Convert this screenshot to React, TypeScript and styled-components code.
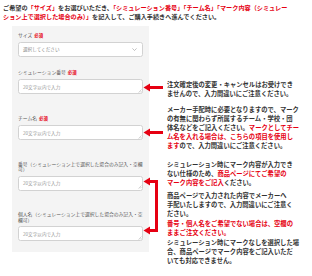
import React from "react";
import styled, { createGlobalStyle } from "styled-components";

const GlobalStyle = createGlobalStyle`
  html, body { margin: 0; padding: 0; background: #ffffff; }
  body { font-family: "Noto Sans CJK JP", "Noto Sans", sans-serif; }
`;

const RED = "#e60012";

const Page = styled.div`
  position: relative;
  width: 312px;
  height: 276px;
  overflow: hidden;
  background: #fff;
`;

const Intro = styled.p`
  margin: 0;
  padding: 2.6px 0 0 3px;
  font-size: 6.15px;
  line-height: 9.4px;
  font-weight: 700;
  color: #333;
  white-space: nowrap;
`;

const Em = styled.span`
  color: ${RED};
`;

const Main = styled.div`
  display: flex;
  align-items: flex-start;
  margin-top: 4.6px;
`;

const Panel = styled.div`
  margin-left: 12px;
  width: 137px;
  height: 226px;
  box-sizing: border-box;
  background: #f4f4f4;
  padding: 5.5px 6px 0 6px;
`;

const Field = styled.div<{ $mt: number }>`
  margin-top: ${(p) => p.$mt}px;
`;

const Label = styled.div`
  font-size: 4.8px;
  line-height: 5.5px;
  color: #555;
  margin-bottom: 4px;
`;

const Req = styled.span`
  color: ${RED};
  font-size: 4.4px;
  font-weight: 700;
  margin-left: 2px;
`;

const SelectBox = styled.div`
  display: flex;
  align-items: center;
  justify-content: space-between;
  height: 14.5px;
  box-sizing: border-box;
  background: #fff;
  border: 1px solid #d2d2d2;
  border-radius: 2.5px;
  padding: 0 5px 0 4px;
  font-size: 4.6px;
  color: #888;
`;

const BoxWrap = styled.div`
  position: relative;
`;

const TextBox = styled.textarea`
  display: block;
  width: 100%;
  height: 15px;
  box-sizing: border-box;
  margin: 0;
  background: #fff;
  border: 1px solid #d2d2d2;
  border-radius: 2.5px;
  padding: 3.5px 4px 0 4px;
  font-family: "Noto Sans CJK JP", "Noto Sans", sans-serif;
  font-size: 4.6px;
  line-height: 6px;
  color: #333;
  resize: none;
  overflow: hidden;
  &::placeholder { color: #999; }
`;

const Grip = styled.svg`
  position: absolute;
  right: 1.5px;
  bottom: 1.5px;
  width: 4px;
  height: 4px;
`;

const Notes = styled.div`
  margin-left: 18px;
  margin-top: 53.5px;
  width: 133px;
  font-size: 6.3px;
  line-height: 9px;
  font-weight: 700;
  color: #333;
  white-space: nowrap;
`;

const Para = styled.p<{ $mt: number; $red?: boolean }>`
  margin: ${(p) => p.$mt}px 0 0 0;
  color: ${(p) => (p.$red ? RED : "inherit")};
`;

const ArrowLayer = styled.svg`
  position: absolute;
  left: 0;
  top: 0;
  width: 312px;
  height: 276px;
  pointer-events: none;
`;

function TextField({ placeholder }: { placeholder: string }) {
  return (
    <BoxWrap>
      <TextBox placeholder={placeholder} />
      <Grip viewBox="0 0 4 4">
        <path d="M3.5 0.5 L0.5 3.5 M3.5 2 L2 3.5" stroke="#aaa" strokeWidth="0.5" fill="none" />
      </Grip>
    </BoxWrap>
  );
}

export default function App() {
  return (
    <Page>
      <GlobalStyle />
      <Intro>
        ご希望の<Em>「サイズ」</Em>をお選びいただき、<Em>「シミュレーション番号」「チーム名」「マーク内容（シミュレー</Em>
        <br />
        <Em>ション上で選択した場合のみ）」</Em>を記入して、ご購入手続きへ進んでください。
      </Intro>
      <Main>
        <Panel>
          <Field $mt={0}>
            <Label>
              サイズ<Req>必須</Req>
            </Label>
            <SelectBox>
              <span>選択してください</span>
              <svg width="5" height="3" viewBox="0 0 5 3">
                <path d="M0.4 0.4 L2.5 2.5 L4.6 0.4" stroke="#999" strokeWidth="0.6" fill="none" />
              </svg>
            </SelectBox>
          </Field>
          <Field $mt={12}>
            <Label>
              シミュレーション番号<Req>必須</Req>
            </Label>
            <TextField placeholder="20文字以内で入力" />
          </Field>
          <Field $mt={20.5}>
            <Label>
              チーム名<Req>必須</Req>
            </Label>
            <TextField placeholder="20文字以内で入力" />
          </Field>
          <Field $mt={20.5}>
            <Label>番号（シミュレーション上で選択した場合のみ記入・空欄可）</Label>
            <TextField placeholder="20文字以内で入力" />
          </Field>
          <Field $mt={20.5}>
            <Label>個人名（シミュレーション上で選択した場合のみ記入・空欄可）</Label>
            <TextField placeholder="20文字以内で入力" />
          </Field>
        </Panel>
        <Notes>
          <Para $mt={0}>
            注文確定後の変更・キャンセルはお受けでき
            <br />
            ませんので、入力間違いにご注意ください。
          </Para>
          <Para $mt={7.7}>
            メーカー手配時に必要となりますので、マーク
            <br />
            の有無に関わらず所属するチーム・学校・団
            <br />
            体名などをご記入ください。<Em>マークとしてチー</Em>
            <br />
            <Em>ム名を入れる場合は、こちらの項目を使用し</Em>
            <br />
            <Em>ます</Em>ので、入力間違いにご注意ください。
          </Para>
          <Para $mt={9.6}>
            シミュレーション時にマーク内容が入力でき
            <br />
            ない仕様のため、<Em>商品ページにてご希望の</Em>
            <br />
            <Em>マーク内容をご記入</Em>ください。
          </Para>
          <Para $mt={4}>
            商品ページで入力された内容でメーカーへ
            <br />
            手配いたしますので、入力間違いにご注意く
            <br />
            ださい。
          </Para>
          <Para $mt={1} $red>
            番号・個人名をご希望でない場合は、空欄の
            <br />
            ままご注文ください。
          </Para>
          <Para $mt={1.5}>
            シミュレーション時にマークなしを選択した場
            <br />
            合、商品ページでマーク内容をご記入いただ
            <br />
            いても対応できません。
          </Para>
        </Notes>
      </Main>
      <ArrowLayer viewBox="0 0 312 276">
        <g fill={RED}>
          <rect x="149" y="86" width="14" height="3" />
          <polygon points="143.5,87.5 150,83.5 150,91.5" />
          <rect x="149" y="131" width="14" height="3" />
          <polygon points="143.5,132.5 150,128.5 150,136.5" />
          <rect x="149" y="180" width="9" height="3" />
          <rect x="155" y="180" width="3" height="52" />
          <rect x="149" y="229" width="9" height="3" />
          <polygon points="143.5,181.5 150,177.5 150,185.5" />
          <polygon points="143.5,230.5 150,226.5 150,234.5" />
        </g>
      </ArrowLayer>
    </Page>
  );
}
